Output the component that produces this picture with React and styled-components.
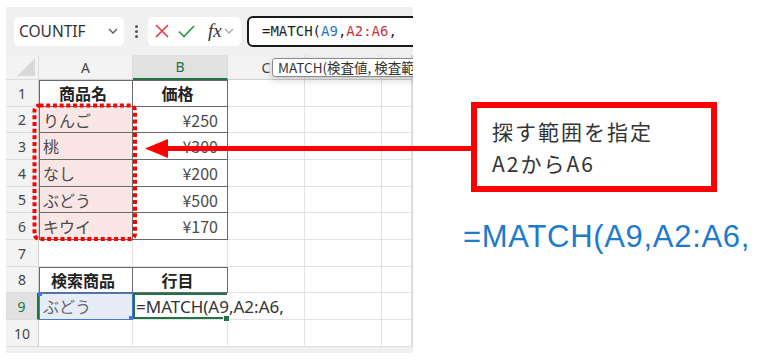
import styled, { createGlobalStyle } from "styled-components";

const GlobalStyle = createGlobalStyle`
  html, body { margin: 0; padding: 0; background: #fff; }
  body {
    width: 770px;
    height: 363px;
    overflow: hidden;
    font-family: "Noto Sans CJK JP", "Noto Sans", sans-serif;
  }
`;

const Page = styled.div`
  position: relative;
  display: flex;
  width: 770px;
  height: 363px;
  padding: 7px 0 0 6px;
  box-sizing: border-box;
`;

const Window = styled.div`
  position: relative;
  flex: none;
  width: 407px;
  height: 346px;
  background: #f0f0f0;
  overflow: hidden;
  display: flex;
  flex-direction: column;
`;

const FormulaBar = styled.div`
  height: 48px;
  flex: none;
  display: flex;
  align-items: center;
  padding-left: 8px;
  & > * { flex: none; }
`;

const NameBox = styled.div`
  width: 110px;
  height: 29px;
  box-sizing: border-box;
  background: #fff;
  border-radius: 5px;
  display: flex;
  align-items: center;
  justify-content: space-between;
  padding: 0 6px 0 5px;
  font-family: "Noto Sans", sans-serif;
  font-size: 15.5px;
  color: #333;
  svg { flex: none; }
`;

const Dots = styled.div`
  width: 4px;
  margin: 0 10px;
  display: flex;
  flex-direction: column;
  align-items: center;
  gap: 2px;
  span {
    width: 3px;
    height: 3px;
    border-radius: 50%;
    background: #555;
  }
`;

const ButtonGroup = styled.div`
  width: 93px;
  height: 29px;
  box-sizing: border-box;
  background: #fff;
  border-radius: 5px;
  display: flex;
  align-items: center;
  padding-left: 7px;
  gap: 9px;
  svg { flex: none; }
`;

const Fx = styled.span`
  font-family: "Liberation Serif", "Times New Roman", serif;
  font-style: italic;
  font-size: 19px;
  color: #333;
  margin-left: 4px;
  margin-right: -7px;
`;

const FormulaBox = styled.div`
  margin-left: 6px;
  width: 220px;
  height: 31px;
  box-sizing: border-box;
  background: #fff;
  border: 2px solid #1a1a1a;
  border-radius: 6px;
  display: flex;
  align-items: center;
  padding-left: 13px;
  font-family: "DejaVu Sans Mono", "Liberation Mono", monospace;
  font-size: 14px;
  color: #1e1e1e;
  white-space: nowrap;
`;

const Ref = styled.span`
  color: ${(p) => p.$color};
`;

const Tooltip = styled.div`
  position: absolute;
  left: 266px;
  top: 51px;
  height: 19px;
  box-sizing: border-box;
  padding: 0 5px;
  background: #fff;
  border: 1px solid #8a8a8a;
  border-radius: 3px;
  box-shadow: 0 3px 8px rgba(0, 0, 0, 0.18);
  font-size: 13.5px;
  line-height: 17px;
  color: #333;
  white-space: nowrap;
  z-index: 3;
`;

const Grid = styled.div`
  display: grid;
  grid-template-columns: 33px 94px 95px 77px 77px 30px;
  grid-template-rows: 25px 27px 26px 27px 27px 26px 27px 27px 26px 27px 27px;
  width: 406px;
  background: #fff;
  border-right: 1px solid #d6d6d6;
`;

const Corner = styled.div`
  background: #f3f3f3;
  border-right: 1px solid #dcdcdc;
  border-bottom: 1px solid #dcdcdc;
  position: relative;
  &::after {
    content: "";
    position: absolute;
    right: 3px;
    bottom: 3px;
    border-left: 18px solid transparent;
    border-bottom: 18px solid #d9d9d9;
  }
`;

const ColHead = styled.div`
  background: ${(p) => (p.$sel ? "#e1e1e1" : "#f3f3f3")};
  color: ${(p) => (p.$sel ? "#217346" : "#444")};
  border-right: 1px solid #dcdcdc;
  border-bottom: ${(p) => (p.$sel ? "2px solid #217346" : "1px solid #d0d0d0")};
  display: flex;
  align-items: center;
  justify-content: center;
  font-family: "Noto Sans", sans-serif;
  font-size: 14px;
`;

const RowHead = styled.div`
  background: ${(p) => (p.$sel ? "#e1e1e1" : "#f3f3f3")};
  color: ${(p) => (p.$sel ? "#217346" : "#444")};
  border-bottom: 1px solid #dcdcdc;
  border-right: ${(p) => (p.$sel ? "2px solid #217346" : "1px solid #d0d0d0")};
  display: flex;
  align-items: center;
  justify-content: center;
  font-family: "Noto Sans", sans-serif;
  font-size: 14px;
`;

const line = "#6a6a6a";

const Cell = styled.div`
  position: relative;
  box-sizing: border-box;
  display: flex;
  align-items: center;
  justify-content: ${(p) =>
    p.$align === "center" ? "center" : p.$align === "right" ? "flex-end" : "flex-start"};
  padding: 0 9px 0 4px;
  font-size: 16px;
  font-weight: ${(p) => (p.$bold ? 700 : 400)};
  color: ${(p) => (p.$bold ? "#222" : "#4a4a4a")};
  background: ${(p) => p.$fill || "#fff"};
  white-space: nowrap;
  border-right: 1px solid ${(p) => (p.$t ? line : "#e2e2e2")};
  border-bottom: 1px solid ${(p) => (p.$t ? line : "#e2e2e2")};
  box-shadow: ${(p) =>
    p.$t ? `inset ${p.$left ? 1 : 0}px ${p.$top ? 1 : 0}px 0 ${line}` : "none"};
`;

const RefCell = styled(Cell)`
  outline: 1.5px solid #4577d6;
  outline-offset: -1.5px;
  color: #666;
  &::before,
  &::after {
    content: "";
    position: absolute;
    width: 4px;
    height: 4px;
    background: #4577d6;
  }
  &::before { left: -1px; top: -1px; }
  &::after { right: -1px; bottom: -1px; }
`;

const ActiveCell = styled(Cell)`
  z-index: 2;
  overflow: visible;
  padding-left: 3px;
  border-right-color: transparent;
  box-shadow: inset 2px 2px 0 #217346, inset 0 -2px 0 #217346;
  color: #333;
  font-family: "Noto Sans", sans-serif;
  font-size: 17px;
  &::after {
    content: "";
    position: absolute;
    right: -3px;
    bottom: -3px;
    width: 5px;
    height: 5px;
    background: #217346;
    border: 1px solid #fff;
  }
`;

const Overlay = styled.svg`
  position: absolute;
  left: 0;
  top: 0;
  pointer-events: none;
  z-index: 5;
`;

const Side = styled.div`
  flex: 1;
  display: flex;
  flex-direction: column;
  align-items: flex-start;
`;

const Callout = styled.div`
  margin: 95px 0 0 58px;
  width: 246px;
  height: 90px;
  box-sizing: border-box;
  border: 6px solid #ff0000;
  padding: 7px 0 0 15px;
  font-size: 21px;
  line-height: 32px;
  letter-spacing: 2px;
  color: #333;
`;

const BigFormula = styled.div`
  margin: 27px 0 0 50px;
  font-family: "Liberation Sans", Arial, sans-serif;
  font-size: 31px;
  line-height: 36px;
  letter-spacing: 0.7px;
  color: #1e7bcc;
  white-space: nowrap;
`;

const rows = [
  { a: "商品名", b: "価格", head: true, top: true },
  { a: "りんご", b: "¥250", pink: true },
  { a: "桃", b: "¥300", pink: true },
  { a: "なし", b: "¥200", pink: true },
  { a: "ぶどう", b: "¥500", pink: true },
  { a: "キウイ", b: "¥170", pink: true },
  {},
  { a: "検索商品", b: "行目", head: true, top: true },
];

const Chevron = ({ color = "#555" }) => (
  <svg width="10" height="6" viewBox="0 0 10 6">
    <path d="M1 1l4 4 4-4" fill="none" stroke={color} strokeWidth="1.3" />
  </svg>
);

export default function App() {
  return (
    <>
      <GlobalStyle />
      <Page>
        <Window>
          <FormulaBar>
            <NameBox>
              COUNTIF
              <Chevron />
            </NameBox>
            <Dots>
              <span />
              <span />
              <span />
            </Dots>
            <ButtonGroup>
              <svg width="14" height="14" viewBox="0 0 14 14">
                <path d="M1 1l12 12M13 1L1 13" stroke="#e23b3f" strokeWidth="1.6" />
              </svg>
              <svg width="17" height="13" viewBox="0 0 17 13">
                <path d="M1 6.5l5 5L16 1" fill="none" stroke="#2f9a4c" strokeWidth="1.7" />
              </svg>
              <Fx>fx</Fx>
              <Chevron color="#aaa" />
            </ButtonGroup>
            <FormulaBox>
              =MATCH(<Ref $color="#2a6fd0">A9</Ref>,<Ref $color="#c8323c">A2:A6</Ref>,
            </FormulaBox>
          </FormulaBar>
          <Tooltip>MATCH(検査値, 検査範囲, [照合の種類])</Tooltip>
          <Grid>
            <Corner />
            <ColHead>A</ColHead>
            <ColHead $sel>B</ColHead>
            <ColHead>C</ColHead>
            <ColHead>D</ColHead>
            <ColHead>E</ColHead>
            {rows.map((r, i) => {
              const t = !!(r.a || r.b);
              return [
                <RowHead key={`h${i}`}>{i + 1}</RowHead>,
                <Cell
                  key={`a${i}`}
                  $t={t}
                  $left
                  $top={r.top}
                  $bold={r.head}
                  $align={r.head ? "center" : "left"}
                  $fill={r.pink ? "#fbe6e6" : undefined}
                >
                  {r.a}
                </Cell>,
                <Cell
                  key={`b${i}`}
                  $t={t}
                  $top={r.top}
                  $bold={r.head}
                  $align={r.head ? "center" : "right"}
                >
                  {r.b}
                </Cell>,
                <Cell key={`c${i}`} />,
                <Cell key={`d${i}`} />,
                <Cell key={`e${i}`} />,
              ];
            })}
            <RowHead $sel>9</RowHead>
            <RefCell $fill="#e6edf9">ぶどう</RefCell>
            <ActiveCell>=MATCH(A9,A2:A6,</ActiveCell>
            <Cell />
            <Cell />
            <Cell />
            <RowHead>10</RowHead>
            <Cell />
            <Cell />
            <Cell />
            <Cell />
            <Cell />
          </Grid>
        </Window>
        <Side>
          <Callout>
            探す範囲を指定
            <br />
            A2からA6
          </Callout>
          <BigFormula>=MATCH(A9,A2:A6,</BigFormula>
        </Side>
        <Overlay width="770" height="363" viewBox="0 0 770 363">
          <rect
            x="34.5"
            y="105.5"
            width="100.5"
            height="133.5"
            rx="5"
            fill="none"
            stroke="#ff0000"
            strokeWidth="4"
            strokeDasharray="4 2.7"
          />
          <line x1="164" y1="148.5" x2="474" y2="148.5" stroke="#ff0000" strokeWidth="5" />
          <polygon points="145,148.5 168,139 168,158" fill="#ff0000" />
        </Overlay>
      </Page>
    </>
  );
}
